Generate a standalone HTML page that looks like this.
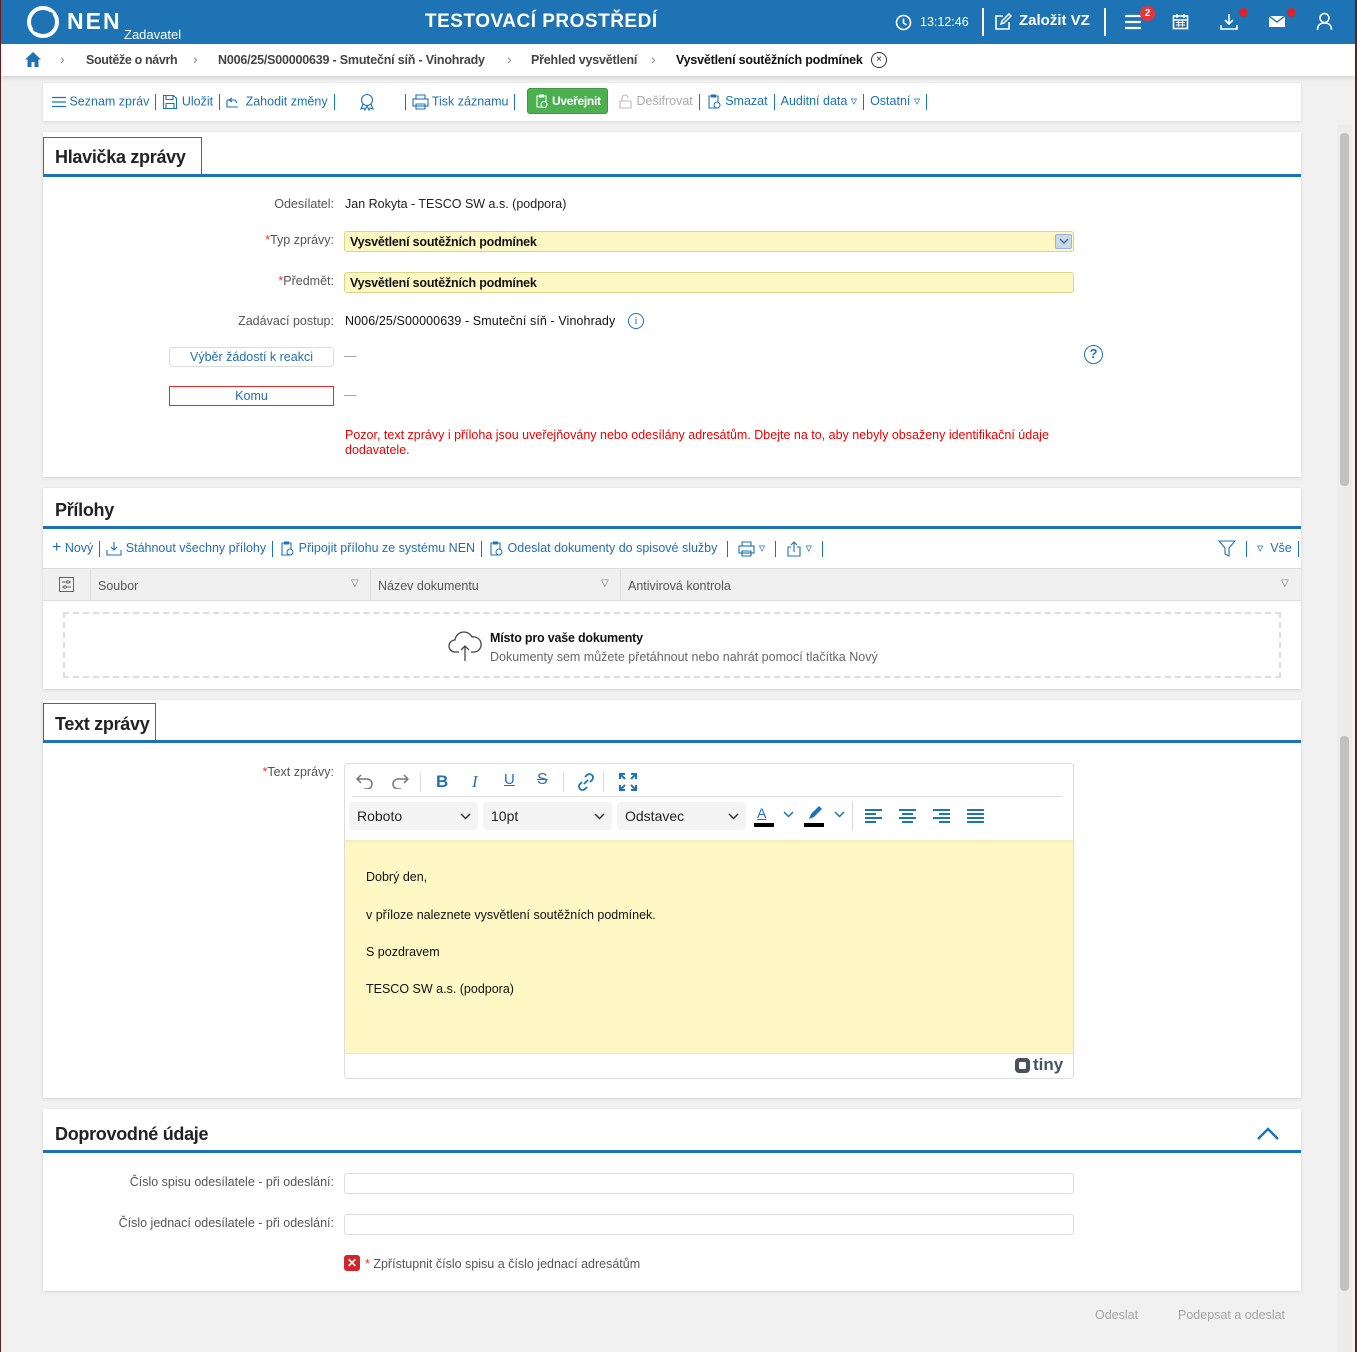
<!DOCTYPE html>
<html><head><meta charset="utf-8">
<style>
*{box-sizing:border-box;margin:0;padding:0}
body{width:1357px;height:1352px;position:relative;overflow:hidden;background:#f1f1f1;font-family:"Liberation Sans",sans-serif;font-size:12.5px;color:#222}
.a{position:absolute;white-space:nowrap}
.blue{color:#1f6fb0}
.panel{position:absolute;left:43px;width:1258px;background:#fff;box-shadow:0 1px 3px rgba(0,0,0,.12)}
.line{position:absolute;left:0;width:1258px;height:3px;background:#1e73b4}
.ttl{position:absolute;font-size:18px;font-weight:bold;color:#222;letter-spacing:-.3px}
.lbl{position:absolute;right:1023px;color:#555;text-align:right;white-space:nowrap}
.req{color:#e33}
.inp{position:absolute;left:344px;width:730px;height:21px;border:1px solid #ddd;border-radius:3px;background:#fff}
.yel{background:#fdf8c3;border-color:#dcd68a}
.sep{display:inline-block;width:1px;height:16px;background:#1e73b4;vertical-align:middle;margin:0 6px}
svg{display:inline-block;vertical-align:middle}
.rb{position:absolute;border:1.5px solid #e52b2b;border-bottom:none}
</style></head><body>
<div class="a" style="left:0;top:0;width:1px;height:1352px;background:#6b1c1c"></div>
<div class="a" style="left:1355px;top:0;width:2px;height:1352px;background:#6b1c1c"></div>

<div class="a" style="left:1px;top:0;width:1354px;height:44px;background:#1e73b4"></div>
<svg class="a" style="left:26px;top:5px" width="34" height="34" viewBox="0 0 34 34"><circle cx="17" cy="17" r="14" fill="none" stroke="#fff" stroke-width="4"/><path d="M8 26 Q17 17 26 8" stroke="#1e73b4" stroke-width="4" fill="none"/></svg>
<div class="a" style="left:67px;top:8px;color:#fff;font-size:23px;font-weight:bold;letter-spacing:2px">NEN</div>
<div class="a" style="left:124px;top:27px;color:#fff;font-size:13px">Zadavatel</div>
<div class="a" style="left:425px;top:11px;color:#fff;font-size:19px;font-weight:bold;letter-spacing:.5px">TESTOVACÍ PROSTŘEDÍ</div>
<svg class="a" style="left:895px;top:14px" width="17" height="17" viewBox="0 0 17 17"><circle cx="8.5" cy="8.5" r="7" fill="none" stroke="#fff" stroke-width="1.6"/><path d="M8.5 4.5v4.5l3 2" stroke="#fff" stroke-width="1.6" fill="none"/></svg>
<div class="a" style="left:920px;top:15px;color:#fff;font-size:12.5px">13:12:46</div>
<div class="a" style="left:982px;top:8px;width:2px;height:28px;background:#fff"></div>
<svg class="a" style="left:994px;top:13px" width="18" height="18" viewBox="0 0 18 18"><path d="M9 3H2v13h13V9" fill="none" stroke="#fff" stroke-width="1.6"/><path d="M7 11l1-3 7-7 2 2-7 7z" fill="none" stroke="#fff" stroke-width="1.5"/></svg>
<div class="a" style="left:1019px;top:12px;color:#fff;font-size:15px;font-weight:bold">Založit VZ</div>
<div class="a" style="left:1104px;top:8px;width:2px;height:28px;background:#fff"></div>
<svg class="a" style="left:1124px;top:14px" width="18" height="16" viewBox="0 0 18 16"><path d="M1 2h16M1 8h16M1 14h16" stroke="#fff" stroke-width="2.2"/></svg>
<div class="a" style="left:1140px;top:6px;width:15px;height:15px;border-radius:50%;background:#e8333a;color:#fff;font-size:10px;font-weight:bold;text-align:center;line-height:15px">2</div>
<svg class="a" style="left:1172px;top:13px" width="17" height="17" viewBox="0 0 17 17"><rect x="1.5" y="3" width="14" height="12.5" fill="none" stroke="#fff" stroke-width="1.6"/><path d="M5 1v4M12 1v4M1.5 7h14" stroke="#fff" stroke-width="1.6"/><path d="M4 9.5h9M4 12h9M6.5 8v6M10.5 8v6" stroke="#fff" stroke-width="1"/></svg>
<svg class="a" style="left:1220px;top:13px" width="18" height="18" viewBox="0 0 18 18"><path d="M9 1v10M5 7l4 4 4-4" fill="none" stroke="#fff" stroke-width="1.6"/><path d="M1 12v4h16v-4" fill="none" stroke="#fff" stroke-width="1.6"/></svg>
<div class="a" style="left:1239px;top:8px;width:9px;height:9px;border-radius:50%;background:#d9262c"></div>
<svg class="a" style="left:1268px;top:15px" width="18" height="13" viewBox="0 0 18 13"><rect x="1" y="1" width="16" height="11" fill="#fff"/><path d="M1 1l8 6 8-6" fill="none" stroke="#1e73b4" stroke-width="1.4"/></svg>
<div class="a" style="left:1287px;top:8px;width:9px;height:9px;border-radius:50%;background:#d9262c"></div>
<svg class="a" style="left:1316px;top:12px" width="17" height="19" viewBox="0 0 17 19"><circle cx="8.5" cy="6" r="4.5" fill="none" stroke="#fff" stroke-width="1.6"/><path d="M1.5 18c0-5 3-7 7-7s7 2 7 7" fill="none" stroke="#fff" stroke-width="1.6"/></svg>

<div class="a" style="left:1px;top:44px;width:1354px;height:32px;background:#fff;box-shadow:0 2px 4px rgba(0,0,0,.12)"></div>
<svg class="a" style="left:24px;top:51px" width="18" height="17" viewBox="0 0 18 17"><path d="M9 1L1 8.5h2.5V16h4v-5h3v5h4V8.5H17z" fill="#1e73b4"/></svg>
<div class="a" style="left:60px;top:51px;font-size:14px;color:#888">›</div>
<div class="a" style="left:86px;top:53px;color:#444;font-weight:bold;font-size:12.5px;letter-spacing:-.35px">Soutěže o návrh</div>
<div class="a" style="left:193px;top:51px;font-size:14px;color:#888">›</div>
<div class="a" style="left:218px;top:53px;color:#444;font-weight:bold;font-size:12.5px;letter-spacing:-.2px">N006/25/S00000639 - Smuteční síň - Vinohrady</div>
<div class="a" style="left:507px;top:51px;font-size:14px;color:#888">›</div>
<div class="a" style="left:531px;top:53px;color:#444;font-weight:bold;font-size:12.5px;letter-spacing:-.2px">Přehled vysvětlení</div>
<div class="a" style="left:651px;top:51px;font-size:14px;color:#888">›</div>
<div class="a" style="left:676px;top:53px;color:#111;font-weight:bold;font-size:12.5px;letter-spacing:-.2px">Vysvětlení soutěžních podmínek</div>
<div class="a" style="left:871px;top:52px;width:16px;height:16px;border:1px solid #333;border-radius:50%;font-size:10px;text-align:center;line-height:14px">×</div>

<div class="a" style="left:43px;top:83px;width:1258px;height:38px;background:#fff;box-shadow:0 1px 3px rgba(0,0,0,.1)"></div>
<div class="a blue" style="left:52px;top:93px;font-size:12.5px;line-height:16px">
<svg width="14" height="12" viewBox="0 0 14 12"><path d="M0 1.5h14M0 6h14M0 10.5h14" stroke="#1e73b4" stroke-width="1.2"/></svg> Seznam zpráv<span class="sep"></span><svg width="16" height="16" viewBox="0 0 16 16"><path d="M1.5 1.5h10l3 3v10h-13z M4 1.5v4h7v-4 M4 14.5v-5h8v5" fill="none" stroke="#1e73b4" stroke-width="1.1"/></svg> Uložit<span class="sep"></span><svg width="16" height="14" viewBox="0 0 16 14"><path d="M1 5h8l2 3M1 5v7h11M6 3l-3 2 3 2" fill="none" stroke="#1e73b4" stroke-width="1.1"/></svg> Zahodit změny<span class="sep"></span><span style="display:inline-block;width:18px"></span><svg width="16" height="18" viewBox="0 0 16 18"><circle cx="8" cy="7" r="5.5" fill="none" stroke="#1e73b4" stroke-width="1.1"/><path d="M4 11l-2 5 3-1 1 2 2-4 2 4 1-2 3 1-2-5" fill="none" stroke="#1e73b4" stroke-width="1.1"/></svg><span style="display:inline-block;width:24px"></span><span class="sep"></span><svg width="17" height="16" viewBox="0 0 17 16"><rect x="1" y="5" width="15" height="7" fill="none" stroke="#1e73b4" stroke-width="1.1"/><path d="M4 5V1h9v4M4 10h9v5H4z" fill="none" stroke="#1e73b4" stroke-width="1.1"/></svg> Tisk záznamu<span class="sep"></span></div>
<div class="a" style="left:527px;top:88px;width:81px;height:26px;background:#4caf50;border-radius:3px;border:1px solid #3f9a43;color:#fff;font-weight:bold;font-size:12px;line-height:24px;padding-left:6px;letter-spacing:-.3px"><svg width="15" height="15" viewBox="0 0 15 15"><path d="M3 2h9v11H3z M5.5 1h4v2h-4z" fill="none" stroke="#fff" stroke-width="1.1"/><circle cx="10" cy="10.5" r="3" fill="#4caf50" stroke="#fff"/></svg> Uveřejnit</div>
<div class="a" style="left:618px;top:93px;color:#aaa;font-size:12.5px;line-height:16px"><svg width="15" height="15" viewBox="0 0 15 15"><path d="M2 7h11v7H2z M4 7V4a3 3 0 0 1 6 0" fill="none" stroke="#bbb" stroke-width="1.1"/></svg> Dešifrovat<span class="sep"></span><span class="blue"><svg width="16" height="16" viewBox="0 0 16 16"><path d="M3 2h9v12H3z M5.5 1h4v2h-4z" fill="none" stroke="#1e73b4" stroke-width="1.1"/><circle cx="11" cy="11" r="3" fill="#fff" stroke="#1e73b4"/></svg> Smazat</span><span class="sep"></span><span class="blue">Auditní data ▿</span><span class="sep"></span><span class="blue">Ostatní ▿</span><span class="sep"></span></div>

<div class="panel" style="top:132px;height:345px">
 <div class="rb" style="left:0;top:5px;width:159px;height:37px"></div>
 <div class="ttl" style="left:12px;top:15px">Hlavička zprávy</div>
 <div class="line" style="top:42px"></div>
</div>
<div class="lbl" style="top:197px">Odesílatel:</div>
<div class="a" style="left:345px;top:197px">Jan Rokyta - TESCO SW a.s. (podpora)</div>
<div class="lbl" style="top:233px"><span class="req">*</span>Typ zprávy:</div>
<div class="inp yel" style="top:231px"></div>
<div class="a" style="left:350px;top:235px;font-weight:bold;font-size:12.5px;letter-spacing:-.2px;color:#111">Vysvětlení soutěžních podmínek</div>
<div class="a" style="left:1055px;top:234px;width:17px;height:15px;background:#c9d9ea;border:1px solid #9bb5d1;border-radius:2px"><svg style="position:absolute;left:3px;top:3px" width="10" height="7" viewBox="0 0 10 7"><path d="M1 1l4 4 4-4" fill="none" stroke="#3c6fa4" stroke-width="1.4"/></svg></div>
<div class="lbl" style="top:274px"><span class="req">*</span>Předmět:</div>
<div class="inp yel" style="top:272px"></div>
<div class="a" style="left:350px;top:276px;font-weight:bold;font-size:12.5px;letter-spacing:-.2px;color:#111">Vysvětlení soutěžních podmínek</div>
<div class="lbl" style="top:314px">Zadávací postup:</div>
<div class="a" style="left:345px;top:314px;color:#111;letter-spacing:.1px">N006/25/S00000639 - Smuteční síň - Vinohrady</div>
<div class="a" style="left:628px;top:313px;width:16px;height:16px;border:1px solid #1e73b4;border-radius:50%;color:#1e73b4;font-size:11px;text-align:center;line-height:14px;font-family:'Liberation Serif',serif">i</div>
<div class="a" style="left:169px;top:347px;width:165px;height:20px;border:1px solid #ddd;border-radius:4px;text-align:center;line-height:18px" ><span class="blue">Výběr žádostí k reakci</span></div>
<div class="a" style="left:344px;top:349px;color:#999">—</div>
<div class="a" style="left:1084px;top:345px;width:19px;height:19px;border:1.5px solid #1e73b4;border-radius:50%;color:#1e73b4;font-size:13px;text-align:center;line-height:16px;font-weight:bold">?</div>
<div class="a" style="left:169px;top:386px;width:165px;height:20px;border:1px solid #e52b2b;text-align:center;line-height:18px"><span class="blue">Komu</span></div>
<div class="a" style="left:344px;top:388px;color:#999">—</div>
<div class="a" style="left:345px;top:428px;color:#e00;font-size:12.5px;line-height:15px;white-space:normal;width:735px">Pozor, text zprávy i příloha jsou uveřejňovány nebo odesílány adresátům. Dbejte na to, aby nebyly obsaženy identifikační údaje dodavatele.</div>

<div class="panel" style="top:488px;height:201px">
 <div class="ttl" style="left:12px;top:12px">Přílohy</div>
 <div class="line" style="top:38px"></div>
 <div class="a blue" style="left:9px;top:52px;font-size:12.5px;line-height:16px"><span style="font-size:16px">+</span> Nový<span class="sep"></span><svg width="16" height="15" viewBox="0 0 16 15"><path d="M8 1v8M5 6l3 3 3-3M1 9v5h14V9" fill="none" stroke="#1e73b4" stroke-width="1.1"/></svg> Stáhnout všechny přílohy<span class="sep"></span><svg width="16" height="16" viewBox="0 0 16 16"><path d="M3 2h9v12H3z M5.5 1h4v2h-4z" fill="none" stroke="#1e73b4" stroke-width="1.1"/><circle cx="11" cy="11" r="3" fill="#fff" stroke="#1e73b4"/></svg> Připojit přílohu ze systému NEN<span class="sep"></span><svg width="16" height="16" viewBox="0 0 16 16"><path d="M3 2h9v12H3z M5.5 1h4v2h-4z" fill="none" stroke="#1e73b4" stroke-width="1.1"/><circle cx="11" cy="11" r="3" fill="#fff" stroke="#1e73b4"/></svg> Odeslat dokumenty do spisové služby<span class="sep" style="margin:0 10px"></span><svg width="17" height="16" viewBox="0 0 17 16"><rect x="1" y="5" width="15" height="7" fill="none" stroke="#1e73b4" stroke-width="1.1"/><path d="M4 5V1h9v4M4 10h9v5H4z" fill="none" stroke="#1e73b4" stroke-width="1.1"/></svg> ▿<span class="sep" style="margin:0 10px"></span><svg width="16" height="16" viewBox="0 0 16 16"><path d="M8 11V1M5 4l3-3 3 3M5 6H2v9h12V6h-3" fill="none" stroke="#1e73b4" stroke-width="1.1"/></svg> ▿<span class="sep" style="margin:0 10px"></span></div>
 <div class="a blue" style="left:1175px;top:52px;line-height:16px"><svg width="18" height="17" viewBox="0 0 18 17"><path d="M1 1h16l-6 7v8l-4-2V8z" fill="none" stroke="#1e73b4" stroke-width="1.1"/></svg><span class="sep" style="margin:0 10px"></span>▿ &nbsp;Vše<span class="sep"></span></div>
 <div class="a" style="left:0;top:80px;width:1258px;height:33px;background:#f0f0f0;border-top:1px solid #ddd;border-bottom:1px solid #ddd"></div>
 <div class="a" style="left:47px;top:80px;width:1px;height:33px;background:#ddd"></div>
 <div class="a" style="left:327px;top:80px;width:1px;height:33px;background:#ddd"></div>
 <div class="a" style="left:577px;top:80px;width:1px;height:33px;background:#ddd"></div>
 <svg class="a" style="left:16px;top:89px" width="15" height="15" viewBox="0 0 15 15"><rect x=".5" y=".5" width="14" height="14" fill="none" stroke="#666"/><path d="M3 5h9M3 10h9" stroke="#666"/><circle cx="9" cy="5" r="1.3" fill="#fff" stroke="#666"/><circle cx="6" cy="10" r="1.3" fill="#fff" stroke="#666"/></svg>
 <div class="a" style="left:55px;top:91px;color:#555">Soubor</div>
 <div class="a" style="left:308px;top:90px;color:#777;font-size:10px">▽</div>
 <div class="a" style="left:335px;top:91px;color:#555">Název dokumentu</div>
 <div class="a" style="left:558px;top:90px;color:#777;font-size:10px">▽</div>
 <div class="a" style="left:585px;top:91px;color:#555">Antivirová kontrola</div>
 <div class="a" style="left:1238px;top:90px;color:#777;font-size:10px">▽</div>
 <div class="a" style="left:20px;top:124px;width:1218px;height:66px;border:2px dashed #ddd"></div>
 <svg class="a" style="left:404px;top:140px" width="36" height="34" viewBox="0 0 36 34"><path d="M12 24H8a6 6 0 0 1 0-12 9 9 0 0 1 17-3 7 7 0 0 1 3 15h-4" fill="none" stroke="#444" stroke-width="1.3"/><path d="M18 33V18M14 22l4-4 4 4" fill="none" stroke="#444" stroke-width="1.3"/></svg>
 <div class="a" style="left:447px;top:143px;font-weight:bold;color:#111;letter-spacing:-.2px">Místo pro vaše dokumenty</div>
 <div class="a" style="left:447px;top:162px;color:#666">Dokumenty sem můžete přetáhnout nebo nahrát pomocí tlačítka Nový</div>
</div>

<div class="panel" style="top:700px;height:398px">
 <div class="rb" style="left:0;top:3px;width:113px;height:38px"></div>
 <div class="ttl" style="left:12px;top:14px">Text zprávy</div>
 <div class="line" style="top:40px"></div>
</div>
<div class="lbl" style="top:765px"><span class="req">*</span>Text zprávy:</div>
<div class="a" style="left:344px;top:763px;width:730px;height:316px;border:1px solid #ddd;border-radius:4px;background:#fff"></div>
<div class="a" style="left:352px;top:796px;width:710px;height:1px;background:#ddd"></div>
<svg class="a" style="left:356px;top:773px" width="18" height="16" viewBox="0 0 18 16"><path d="M5 2L1 6l4 4M1 6h10a5 5 0 0 1 0 10H8" fill="none" stroke="#777" stroke-width="1.5"/></svg>
<svg class="a" style="left:391px;top:773px" width="18" height="16" viewBox="0 0 18 16"><path d="M13 2l4 4-4 4M17 6H7a5 5 0 0 0 0 10h3" fill="none" stroke="#777" stroke-width="1.5"/></svg>
<div class="a" style="left:420px;top:772px;width:1px;height:20px;background:#ddd"></div>
<div class="a" style="left:436px;top:772px;font-size:17px;font-weight:bold;color:#1e73b4">B</div>
<div class="a" style="left:472px;top:772px;font-size:17px;font-style:italic;color:#1e73b4;font-family:'Liberation Serif',serif">I</div>
<div class="a" style="left:504px;top:771px;font-size:15px;text-decoration:underline;color:#1e73b4">U</div>
<div class="a" style="left:537px;top:771px;font-size:16px;text-decoration:line-through;color:#1e73b4">S</div>
<div class="a" style="left:563px;top:772px;width:1px;height:20px;background:#ddd"></div>
<svg class="a" style="left:576px;top:772px" width="20" height="20" viewBox="0 0 20 20"><path d="M8 12l4-4M9 5l2-2a3.5 3.5 0 0 1 5 5l-2 2M11 15l-2 2a3.5 3.5 0 0 1-5-5l2-2" fill="none" stroke="#1e73b4" stroke-width="1.8"/></svg>
<div class="a" style="left:603px;top:772px;width:1px;height:20px;background:#ddd"></div>
<svg class="a" style="left:619px;top:773px" width="18" height="18" viewBox="0 0 18 18"><path d="M1 6V1h5M12 1h5v5M17 12v5h-5M6 17H1v-5M1 1l5 5M17 1l-5 5M17 17l-5-5M1 17l5-5" fill="none" stroke="#1e73b4" stroke-width="2"/></svg>
<div class="a" style="left:349px;top:802px;width:129px;height:28px;background:#f4f4f4;border-radius:4px;font-size:14px;line-height:28px;padding-left:8px;color:#222">Roboto<svg style="position:absolute;right:7px;top:11px" width="11" height="7" viewBox="0 0 11 7"><path d="M1 1l4.5 4.5L10 1" fill="none" stroke="#333" stroke-width="1.5"/></svg></div>
<div class="a" style="left:483px;top:802px;width:129px;height:28px;background:#f4f4f4;border-radius:4px;font-size:14px;line-height:28px;padding-left:8px;color:#222">10pt<svg style="position:absolute;right:7px;top:11px" width="11" height="7" viewBox="0 0 11 7"><path d="M1 1l4.5 4.5L10 1" fill="none" stroke="#333" stroke-width="1.5"/></svg></div>
<div class="a" style="left:617px;top:802px;width:129px;height:28px;background:#f4f4f4;border-radius:4px;font-size:14px;line-height:28px;padding-left:8px;color:#222">Odstavec<svg style="position:absolute;right:7px;top:11px" width="11" height="7" viewBox="0 0 11 7"><path d="M1 1l4.5 4.5L10 1" fill="none" stroke="#333" stroke-width="1.5"/></svg></div>
<div class="a" style="left:757px;top:805px;font-size:14px;text-decoration:underline;color:#1e73b4">A</div>
<div class="a" style="left:754px;top:823px;width:20px;height:4px;background:#000"></div>
<svg class="a" style="left:783px;top:811px" width="11" height="7" viewBox="0 0 11 7"><path d="M1 1l4.5 4.5L10 1" fill="none" stroke="#1e73b4" stroke-width="1.5"/></svg>
<svg class="a" style="left:806px;top:805px" width="18" height="16" viewBox="0 0 18 16"><path d="M3 14l2-5 8-8 3 3-8 8z" fill="#1e73b4"/></svg>
<div class="a" style="left:804px;top:823px;width:20px;height:4px;background:#000"></div>
<svg class="a" style="left:834px;top:811px" width="11" height="7" viewBox="0 0 11 7"><path d="M1 1l4.5 4.5L10 1" fill="none" stroke="#1e73b4" stroke-width="1.5"/></svg>
<div class="a" style="left:852px;top:801px;width:1px;height:30px;background:#ddd"></div>
<svg class="a" style="left:865px;top:808px" width="120" height="16" viewBox="0 0 120 16"><g stroke="#1e73b4" stroke-width="2"><path d="M0 2h17M0 6h11M0 10h17M0 14h11"/><path d="M34 2h17M37 6h11M34 10h17M37 14h11"/><path d="M68 2h17M74 6h11M68 10h17M74 14h11"/><path d="M102 2h17M102 6h17M102 10h17M102 14h17"/></g></svg>
<div class="a" style="left:345px;top:840px;width:728px;height:213px;background:#fff8c4;box-shadow:inset 0 3px 4px -2px rgba(0,0,0,.08)"></div>
<div class="a" style="left:366px;top:870px;font-size:12.5px;color:#111">Dobrý den,</div>
<div class="a" style="left:366px;top:908px;font-size:12.5px;color:#111">v příloze naleznete vysvětlení soutěžních podmínek.</div>
<div class="a" style="left:366px;top:945px;font-size:12.5px;color:#111">S pozdravem</div>
<div class="a" style="left:366px;top:982px;font-size:12.5px;color:#111">TESCO SW a.s. (podpora)</div>
<div class="a" style="left:345px;top:1053px;width:728px;height:1px;background:#e4e4e4"></div>
<div class="a" style="left:1015px;top:1058px;width:15px;height:15px;background:#4a5260;border-radius:4px"></div>
<div class="a" style="left:1019px;top:1062px;width:7px;height:7px;background:#fff;border-radius:1px"></div>
<div class="a" style="left:1033px;top:1055px;font-size:17px;font-weight:bold;color:#4a5260">tiny</div>

<div class="panel" style="top:1109px;height:182px">
 <div class="ttl" style="left:12px;top:15px">Doprovodné údaje</div>
 <div class="line" style="top:41px"></div>
 <svg class="a" style="left:1214px;top:18px" width="22" height="13" viewBox="0 0 22 13"><path d="M1 12L11 2l10 10" fill="none" stroke="#1e73b4" stroke-width="2.5"/></svg>
</div>
<div class="lbl" style="top:1175px">Číslo spisu odesílatele - při odeslání:</div>
<div class="inp" style="top:1173px"></div>
<div class="lbl" style="top:1216px">Číslo jednací odesílatele - při odeslání:</div>
<div class="inp" style="top:1214px"></div>
<div class="a" style="left:344px;top:1255px;width:16px;height:16px;background:#d0262c;border-radius:3px;color:#fff;font-size:12px;font-weight:bold;text-align:center;line-height:16px">✕</div>
<div class="a" style="left:365px;top:1257px;color:#555"><span class="req">*</span> Zpřístupnit číslo spisu a číslo jednací adresátům</div>

<div class="a" style="left:1095px;top:1308px;color:#a5a5a5;font-size:12.5px">Odeslat</div>
<div class="a" style="left:1178px;top:1308px;color:#a5a5a5;font-size:12.5px">Podepsat a odeslat</div>

<div class="a" style="left:1337px;top:125px;width:15px;height:1227px;background:#ececec"></div>
<div class="a" style="left:1340px;top:133px;width:9px;height:353px;background:#c1c1c1;border-radius:4px"></div>
<div class="a" style="left:1340px;top:736px;width:9px;height:555px;background:#c1c1c1;border-radius:4px"></div>
</body></html>
